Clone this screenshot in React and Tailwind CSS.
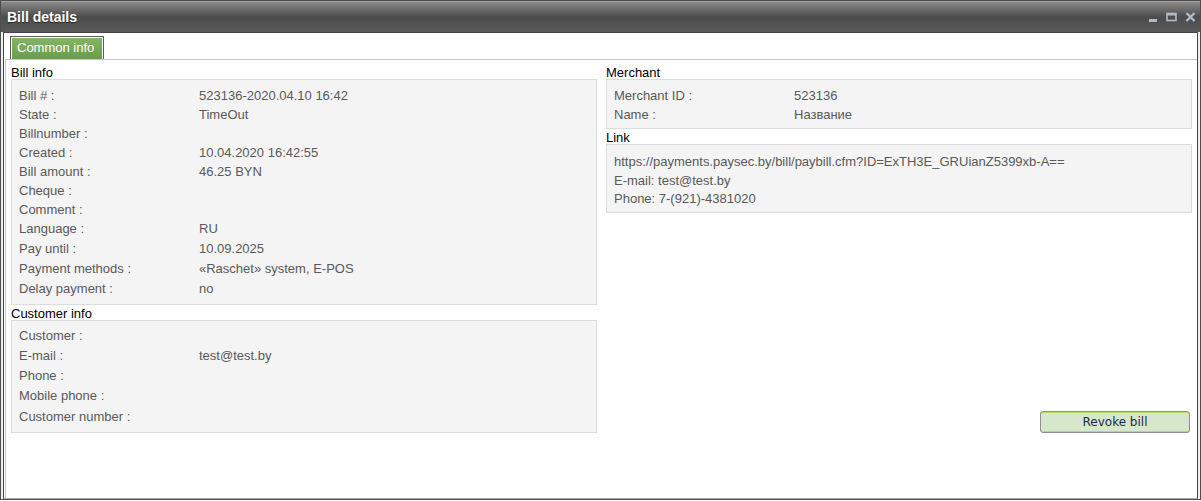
import React from 'react';

const billRows = [
  ['Bill # :', '523136-2020.04.10 16:42', 'h-[19px]'],
  ['State :', 'TimeOut', 'h-[19px]'],
  ['Billnumber :', '', 'h-[19px]'],
  ['Created :', '10.04.2020 16:42:55', 'h-[19px]'],
  ['Bill amount :', '46.25 BYN', 'h-[19px]'],
  ['Cheque :', '', 'h-[19px]'],
  ['Comment :', '', 'h-[19px]'],
  ['Language :', 'RU', 'h-[20px]'],
  ['Pay until :', '10.09.2025', 'h-[20px]'],
  ['Payment methods :', '«Raschet» system, E-POS', 'h-[20px]'],
  ['Delay payment :', 'no', 'h-[19px]'],
];

const customerRows = [
  ['Customer :', '', 'h-[20px]'],
  ['E-mail :', 'test@test.by', 'h-[20px]'],
  ['Phone :', '', 'h-[20px]'],
  ['Mobile phone :', '', 'h-[20px]'],
  ['Customer number :', '', 'h-[21px]'],
];

const merchantRows = [
  ['Merchant ID :', '523136', 'h-[19px]'],
  ['Name :', 'Название', 'h-[19px]'],
];

function Section({ title, children, box }) {
  return (
    <div>
      <div className="h-[14px] leading-[16px] text-black">{title}</div>
      <div className={`border border-[#dcdcdc] bg-[#f4f4f4] px-[7px] ${box}`}>{children}</div>
    </div>
  );
}

function Row({ label, value, h }) {
  return (
    <div className={`flex items-center ${h} text-[#595959]`}>
      <div className="w-[180px] shrink-0">{label}</div>
      <div>{value}</div>
    </div>
  );
}

function WindowIcons() {
  return (
    <div className="flex items-center gap-[8px] pr-[4px] text-[#aebcc6]">
      <svg width="10" height="12" viewBox="0 0 10 12">
        <rect x="1" y="8" width="8" height="3" fill="currentColor" />
      </svg>
      <svg width="11" height="12" viewBox="0 0 11 12">
        <rect x="1" y="2.5" width="9" height="7" fill="none" stroke="currentColor" strokeWidth="1.6" />
        <rect x="1" y="2" width="9" height="2.5" fill="currentColor" />
      </svg>
      <svg width="11" height="12" viewBox="0 0 11 12">
        <path d="M1.5 2 L9.5 10 M9.5 2 L1.5 10" stroke="currentColor" strokeWidth="2.4" />
      </svg>
    </div>
  );
}

export default function App() {
  return (
    <div className="w-[1201px] h-[501px] bg-white" style={{ fontFamily: 'Arial, "Liberation Sans", sans-serif' }}>
      <div className="w-[1201px] h-[500px] border border-[#4e4e4e] bg-[#efefef] flex flex-col">
        <div className="h-[31px] flex items-center justify-between bg-gradient-to-b from-[#8a8a8a] via-[#4c4c4c] to-[#5a5a5a] border-t border-[#a0a0a0]">
          <div className="pl-[6px] text-white font-bold text-[14px] [text-shadow:0_1px_1px_#222]">Bill details</div>
          <WindowIcons />
        </div>
        <div className="flex-1 ml-[2px] mr-[2px] border-x border-t border-[#444] border-b border-b-[#aaaaaa] bg-white flex flex-col">
          <div className="pt-[3px] pl-[6px] flex">
            <div className="h-[23px] w-[94px] border border-b-0 border-[#5a5a5a] p-[1px] pb-0 bg-white">
              <div className="h-full bg-gradient-to-b from-[#84b566] to-[#689c4c] text-white text-[13px] leading-[20px] pl-[5px]">
                Common info
              </div>
            </div>
          </div>
          <div className="flex-1 border-t border-l border-[#c8c8c8] ml-[1px] text-[13px]">
            <div className="grid grid-cols-[586px_586px] gap-x-[9px] pl-[5px] pt-[5px]">
              <div className="flex flex-col">
                <Section title="Bill info" box="pt-[6px] pb-[6px]">
                  {billRows.map(([l, v, h]) => (
                    <Row key={l} label={l} value={v} h={h} />
                  ))}
                </Section>
                <div className="h-[1px]" />
                <Section title="Customer info" box="pt-[5px] pb-[5px]">
                  {customerRows.map(([l, v, h]) => (
                    <Row key={l} label={l} value={v} h={h} />
                  ))}
                </Section>
              </div>
              <div className="flex flex-col">
                <Section title="Merchant" box="pt-[6px] pb-[4px]">
                  {merchantRows.map(([l, v, h]) => (
                    <Row key={l} label={l} value={v} h={h} />
                  ))}
                </Section>
                <div className="h-[1px]" />
                <Section title="Link" box="pt-[7px] pb-[4px]">
                  <div className="h-[19px] flex items-center text-[#595959]">
                    https://payments.paysec.by/bill/paybill.cfm?ID=ExTH3E_GRUianZ5399xb-A==
                  </div>
                  <div className="h-[19px] flex items-center text-[#595959]">E-mail: test@test.by</div>
                  <div className="h-[18px] flex items-center text-[#595959]">Phone: 7-(921)-4381020</div>
                </Section>
                <div className="mt-auto self-end mr-[2px]">
                  <button
                    className="w-[150px] h-[22px] rounded-[3px] border border-[#8f8f8f] bg-[#d6e7cb] text-[12px] text-[#1c2a48] shadow-[inset_0_1px_0_#b6dc6a,inset_0_-1px_0_#b6dc6a]"
                    style={{ fontFamily: '"DejaVu Sans", Tahoma, sans-serif' }}
                  >
                    Revoke bill
                  </button>
                </div>
              </div>
            </div>
          </div>
        </div>
      </div>
    </div>
  );
}
